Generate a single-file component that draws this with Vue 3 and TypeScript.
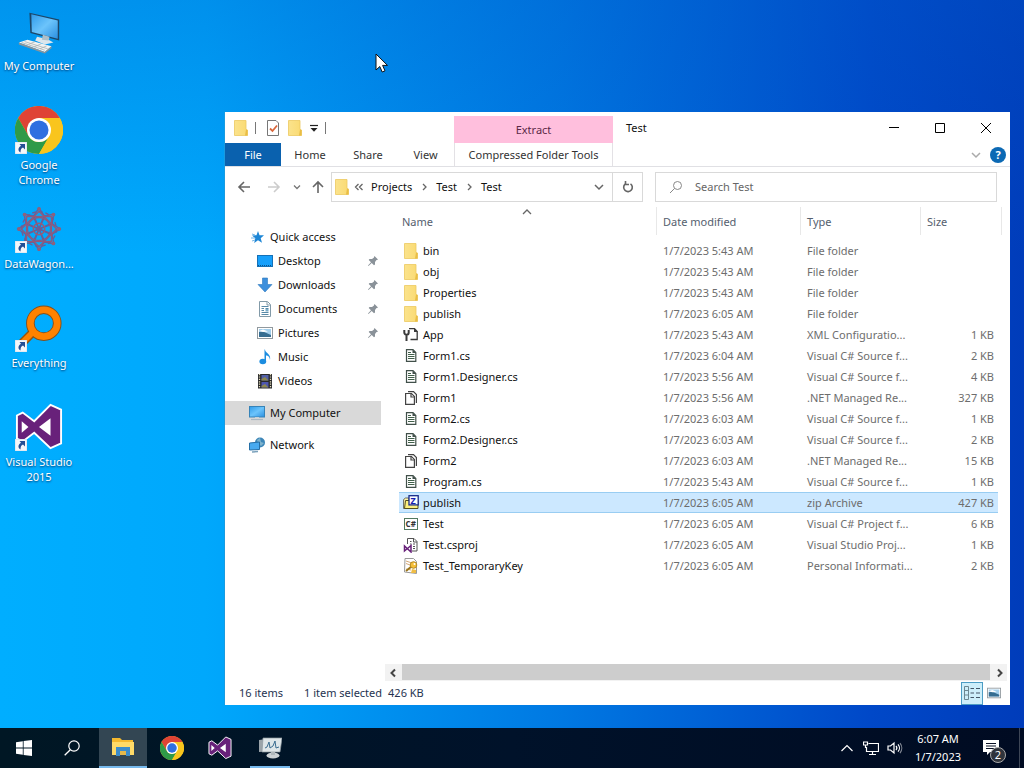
<script setup lang="ts">
import { ref } from 'vue'

interface Shortcut { label: string; icon: string; linked: boolean }
interface NavItem { label: string; icon: string; pinned: boolean }
interface FileRow { name: string; icon: string; date: string; type: string; size: string }

const shortcuts: Shortcut[] = [
  { label: 'My Computer', icon: 'pc', linked: false },
  { label: 'Google Chrome', icon: 'chrome', linked: true },
  { label: 'DataWagon...', icon: 'wagon', linked: true },
  { label: 'Everything', icon: 'everything', linked: true },
  { label: 'Visual Studio 2015', icon: 'vs', linked: true },
]

const quickItems: NavItem[] = [
  { label: 'Desktop', icon: 'desktop', pinned: true },
  { label: 'Downloads', icon: 'download', pinned: true },
  { label: 'Documents', icon: 'document', pinned: true },
  { label: 'Pictures', icon: 'picture', pinned: true },
  { label: 'Music', icon: 'music', pinned: false },
  { label: 'Videos', icon: 'video', pinned: false },
]

const tabs = ['File', 'Home', 'Share', 'View']
const crumbs = ['Projects', 'Test', 'Test']

const files: FileRow[] = [
  { name: 'bin', icon: 'folder', date: '1/7/2023 5:43 AM', type: 'File folder', size: '' },
  { name: 'obj', icon: 'folder', date: '1/7/2023 5:43 AM', type: 'File folder', size: '' },
  { name: 'Properties', icon: 'folder', date: '1/7/2023 5:43 AM', type: 'File folder', size: '' },
  { name: 'publish', icon: 'folder', date: '1/7/2023 6:05 AM', type: 'File folder', size: '' },
  { name: 'App', icon: 'config', date: '1/7/2023 5:43 AM', type: 'XML Configuratio...', size: '1 KB' },
  { name: 'Form1.cs', icon: 'source', date: '1/7/2023 6:04 AM', type: 'Visual C# Source f...', size: '2 KB' },
  { name: 'Form1.Designer.cs', icon: 'source', date: '1/7/2023 5:56 AM', type: 'Visual C# Source f...', size: '4 KB' },
  { name: 'Form1', icon: 'resource', date: '1/7/2023 5:56 AM', type: '.NET Managed Re...', size: '327 KB' },
  { name: 'Form2.cs', icon: 'source', date: '1/7/2023 6:03 AM', type: 'Visual C# Source f...', size: '1 KB' },
  { name: 'Form2.Designer.cs', icon: 'source', date: '1/7/2023 6:03 AM', type: 'Visual C# Source f...', size: '2 KB' },
  { name: 'Form2', icon: 'resource', date: '1/7/2023 6:03 AM', type: '.NET Managed Re...', size: '15 KB' },
  { name: 'Program.cs', icon: 'source', date: '1/7/2023 5:43 AM', type: 'Visual C# Source f...', size: '1 KB' },
  { name: 'publish', icon: 'zip', date: '1/7/2023 6:05 AM', type: 'zip Archive', size: '427 KB' },
  { name: 'Test', icon: 'csharp', date: '1/7/2023 6:05 AM', type: 'Visual C# Project f...', size: '6 KB' },
  { name: 'Test.csproj', icon: 'csproj', date: '1/7/2023 6:05 AM', type: 'Visual Studio Proj...', size: '1 KB' },
  { name: 'Test_TemporaryKey', icon: 'key', date: '1/7/2023 6:05 AM', type: 'Personal Informati...', size: '2 KB' },
]

const selected = ref(12)
const query = ref('')
</script>

<template>
  <div class="screen">
    <svg class="sprites" aria-hidden="true">
      <defs>
        <linearGradient id="g-screen" x1="0" y1="0" x2="1" y2="1">
          <stop offset="0" stop-color="#2f9bea" /><stop offset=".5" stop-color="#6cc4fb" /><stop offset="1" stop-color="#2b8fe0" />
        </linearGradient>
        <linearGradient id="g-folder" x1="0" y1="0" x2="1" y2="0">
          <stop offset="0" stop-color="#fbe38c" /><stop offset="1" stop-color="#fada72" />
        </linearGradient>
        <symbol id="i-pc" viewBox="3 0 50 50">
          <path d="M18 6 49 13V35L19 27Z" fill="#1c4668" />
          <path d="M20 7.500 47.500 14V33L20.500 26Z" fill="url(#g-screen)" />
          <path d="M26 31 37 33.500 43 37 34 39 24 35Z" fill="#dce6ec" /><path d="M32 29 39 31 38 35 31 34Z" fill="#aebfc9" />
          <path d="M7 37 16 34 41 41 34 47Z" fill="#f3f3f1" /><path d="M7 37 34 47 41 41V43L34 48.500 7 39Z" fill="#8b9499" />
          <path d="M10 37 34 45M13 36 37 43.500M17 39 24 36M23 41.500 30 38.500M29 43.500 36 40.500" stroke="#a9b0b3" stroke-width=".8" fill="none" />
        </symbol>
        <symbol id="i-chrome" viewBox="0 0 48 48">
          <circle cx="24" cy="24" r="24" fill="#f9c51d" />
          <path d="M3.200 12A24 24 0 0 1 44.800 12H24L13.600 30Z" fill="#df4335" />
          <path d="M3.200 12 13.600 30A12 12 0 0 0 34.400 30L24 48A24 24 0 0 1 3.200 12Z" fill="#2f9a48" />
          <path d="M44.800 12A24 24 0 0 1 24 48L34.400 30 36 24 33 16 24 12Z" fill="#f9c51d" />
          <circle cx="24" cy="24" r="12" fill="#fff" /><circle cx="24" cy="24" r="9.500" fill="#2f6fe0" />
        </symbol>
        <symbol id="i-wagon" viewBox="0 0 50 50">
          <g fill="none" stroke="#6b5f96" stroke-width="1.400">
            <g>
              <path d="M25 25 19 12 25 3 31 12Z" /><path d="M25 25 19 12 25 3 31 12Z" transform="rotate(45 25 25)" />
              <path d="M25 25 19 12 25 3 31 12Z" transform="rotate(90 25 25)" /><path d="M25 25 19 12 25 3 31 12Z" transform="rotate(135 25 25)" />
              <path d="M25 25 19 12 25 3 31 12Z" transform="rotate(180 25 25)" /><path d="M25 25 19 12 25 3 31 12Z" transform="rotate(225 25 25)" />
              <path d="M25 25 19 12 25 3 31 12Z" transform="rotate(270 25 25)" /><path d="M25 25 19 12 25 3 31 12Z" transform="rotate(315 25 25)" />
            </g>
            <circle cx="25" cy="25" r="18" stroke-dasharray="4 3" /><circle cx="25" cy="25" r="12" stroke="#8f5a7c" />
            <rect x="12" y="12" width="26" height="26" stroke="#8f5a7c" /><rect x="12" y="12" width="26" height="26" transform="rotate(45 25 25)" stroke="#8f5a7c" />
            <circle cx="25" cy="25" r="6" stroke="#985c76" />
          </g>
          <g fill="#8d617d"><circle cx="25" cy="4" r="2" /><circle cx="25" cy="46" r="2" /><circle cx="4" cy="25" r="2" /><circle cx="46" cy="25" r="2" /><circle cx="10" cy="10" r="2" /><circle cx="40" cy="10" r="2" /><circle cx="40" cy="40" r="2" /></g>
        </symbol>
        <symbol id="i-everything" viewBox="0 0 50 50">
          <path d="M18 30 4 44" stroke="#9a5207" stroke-width="9" /><circle cx="30" cy="20" r="14" fill="none" stroke="#84501c" stroke-width="9" />
          <path d="M18 30 4 44" stroke="#ff8200" stroke-width="6" /><circle cx="30" cy="20" r="14" fill="none" stroke="#ff8200" stroke-width="7" />
        </symbol>
        <symbol id="i-vs" viewBox="0 0 50 50">
          <path d="M37 2 48 7V42L37 47 20 31 8 40 2 37V13L8 10 20 19Z" fill="#68217a" stroke="#fff" stroke-width="2" />
          <path d="M7 19 14 25 7 31ZM37 16V34L25 25Z" fill="#fff" />
        </symbol>
        <symbol id="i-link" viewBox="0 0 12 12">
          <rect width="12" height="12" fill="#f4f7fa" stroke="#bcd" stroke-width=".6" /><path d="M4.500 2H10V7.500L8 5.600C6 6.500 5.500 8 5.500 10.500 2.500 8.500 3 5.500 6 3.700Z" fill="#244f95" />
        </symbol>
        <symbol id="i-folder" viewBox="0 0 16 16">
          <path d="M1.500.5H13V9.500L14.500 10V15.500H1.500Z" fill="url(#g-folder)" stroke="#ecc95f" stroke-width=".8" />
          <path d="M13 9.500 12 15.500H14.500V10Z" fill="#e9bd45" />
        </symbol>
        <symbol id="i-config" viewBox="0 0 16 16">
          <path d="M6 1.700H11.500L14.200 4.500V12.500H7.500" fill="none" stroke="#3b3b3b" stroke-width="1.300" /><path d="M11 1V5H15Z" fill="#3b3b3b" />
          <path d="M1.300 3V5.500A2.200 2.200 0 0 0 5.700 5.500V3M3.500 7.500V14" fill="none" stroke="#3b3b3b" stroke-width="2" />
        </symbol>
        <symbol id="i-source" viewBox="0 0 16 16">
          <path d="M3.500 1.700H10L12.800 4.500V13.300H3.500Z" fill="#fff" stroke="#41504a" stroke-width="1.200" /><path d="M9.500 1.500V5H13Z" fill="#41504a" />
          <path d="M5 6.500H11.500M5 8.500H11.500M5 10.500H11.500M5 4.500H8" stroke="#41604a" stroke-width="1" />
        </symbol>
        <symbol id="i-resource" viewBox="0 0 16 16">
          <path d="M2.600 3.500H8.500L11.400 6.400V14.400H2.600Z" fill="#fff" stroke="#444" stroke-width="1.200" /><path d="M8 3.500V7H11.500M5 1.600H10.500L13.400 4.500V13" fill="none" stroke="#444" stroke-width="1.200" />
        </symbol>
        <symbol id="i-zip" viewBox="0 0 16 16">
          <path d="M.6 4.500 2.500 3H6V13.500H.6Z" fill="#fff6a9" stroke="#444" stroke-width=".8" /><path d="M2.500 5.500H15V13.500H1.500Z" fill="#fcf17f" stroke="#55501c" /><rect x="6" y=".7" width="9.200" height="9.200" fill="#fff" stroke="#182b8a" stroke-width="1.300" />
          <text x="7.600" y="8.800" font-size="9" font-weight="700" font-family="Open Sans, sans-serif" fill="#1620b0">Z</text>
        </symbol>
        <symbol id="i-csharp" viewBox="0 0 16 16">
          <rect x="1.500" y="2.500" width="13" height="11" fill="#fff" stroke="#537a60" /><text x="2.600" y="11" font-size="8" font-weight="700" font-family="Open Sans, sans-serif" fill="#333">C#</text>
        </symbol>
        <symbol id="i-csproj" viewBox="0 0 16 16">
          <path d="M4.500 7V1.500H11L14 4.500V14H9" fill="#fff" stroke="#555" /><path d="M10.500 1.500V5H14M7 4.500H8.500M7 7H8.500M10 7H12M10 9.500H12M10 11.500H12" fill="none" stroke="#555" />
          <path d="M1.500 9V14L8 8.500V15L1.500 9Z" fill="none" stroke="#68217a" stroke-width="1.500" />
        </symbol>
        <symbol id="i-key" viewBox="0 0 16 16">
          <path d="M2 .5H10.500L13.500 3.500V15.500L1.500 14Z" fill="#fff" stroke="#999" /><path d="M3 3 9 5M3 5.500 7 7M3 11 8 12" stroke="#d5a978" /><path d="M8.500 8.500 3 13" stroke="#9a7418" stroke-width="2" /><circle cx="10.500" cy="7" r="3.300" fill="#f5bf3a" stroke="#b58b24" /><circle cx="11.500" cy="6" r="1" fill="#fff" /><path d="M9 11 13 12V15H8Z" fill="#efbd45" />
        </symbol>
        <symbol id="i-star" viewBox="0 0 16 16">
          <path d="M9 2 10.500 6.200 15 6.300 11.700 9.300 13 13.800 9 11.300 5.200 14 6.300 9.300 3 6.500 7.500 6.200Z" fill="#1d86d6" /><path d="M3 5 6 6M2 9 6 9M3 12 6 11" stroke="#75b6e7" stroke-width="1" />
        </symbol>
        <symbol id="i-desktop" viewBox="0 0 16 16"><rect x=".5" y="2.500" width="15" height="11" fill="#17a0fb" stroke="#1571b7" /><path d="M1 12.500H15" stroke="#0a538b" stroke-dasharray="1 1" /></symbol>
        <symbol id="i-download" viewBox="0 0 16 16"><path d="M5.500 1H10.500V7.500H15L8 15 1 7.500H5.500Z" fill="#3d8fdc" stroke="#2e78bd" stroke-width=".6" /></symbol>
        <symbol id="i-document" viewBox="0 0 16 16"><path d="M2.500.5H10.500L13.500 3.500V15.500H2.500Z" fill="#fff" stroke="#829aa8" /><path d="M10 1V4H13" fill="none" stroke="#829aa8" /><path d="M4.500 5.500H11.500M4.500 7.500H7M8.500 7.500H11.500M4.500 9.500H7M4.500 11.500H11.500M4.500 13.500H11.500" stroke="#588aa8" /><rect x="8.500" y="8" width="3" height="2.500" fill="#79acc9" /></symbol>
        <symbol id="i-picture" viewBox="0 0 16 16"><rect x=".5" y="2.500" width="15" height="11" fill="#fff" stroke="#91999e" /><path d="M2 4H14V12H2Z" fill="#a3cfec" /><path d="M2 7 6 6.500 14 10V12H2Z" fill="#366d91" /><path d="M2 6 6 4.500 11 6.500 6 7Z" fill="#fff" /></symbol>
        <symbol id="i-music" viewBox="0 0 16 16"><path d="M8 .5C8 4 14.500 5 13 11 12.500 7.500 11 6.800 9 6.600V12.500H7.500V.5Z" fill="#1c8de0" /><ellipse cx="5.800" cy="12.500" rx="3.400" ry="2.800" fill="#1c8de0" /></symbol>
        <symbol id="i-video" viewBox="0 0 16 16"><rect x="1" y="1" width="14" height="14.500" fill="#29292b" /><path d="M2.500 1V15.500M13.500 1V15.500" stroke="#e6dfbd" stroke-width="1.300" stroke-dasharray="1.200 1.200" /><rect x="4.500" y="2" width="7" height="5.500" fill="#5361a7" /><rect x="4.500" y="9" width="7" height="5.500" fill="#4e56b0" /><path d="M4.500 6 8 4 11.500 7.500H4.500ZM4.500 13 8 11 11.500 14.500H4.500Z" fill="#8d8850" /></symbol>
        <symbol id="i-monitor" viewBox="0 0 16 16"><rect x=".5" y="1.500" width="15" height="10.500" fill="url(#g-screen)" stroke="#3683b8" /><path d="M2 14.500H14" stroke="#aab8c2" stroke-width="1.200" /><path d="M6 12.500H10" stroke="#c5d0d6" /></symbol>
        <symbol id="i-network" viewBox="0 0 16 16"><circle cx="11" cy="5.500" r="5" fill="#3d86b8" /><path d="M8 3 11 1 12 5 15 6 12 9 9 6Z" fill="#7fb3cd" /><path d="M.5 6 10.500 5V12.500L.5 13Z" fill="#48aaf0" stroke="#256fa7" /><path d="M3 15 9 14.500" stroke="#7aa1bb" stroke-width="1.500" /></symbol>
        <symbol id="i-pin" viewBox="0 0 12 12"><path d="M7.500 1 11 4.500 10 5 9.500 5 8 7 8 9.500 7 10.300 4.700 8 1.500 11 1 10.500 4 7.300 1.700 5 2.500 4 5 4 7 2.500V2Z" fill="#8a9299" /></symbol>
        <symbol id="i-check" viewBox="0 0 16 16"><path d="M2.500.5H11L13.500 3V15.500H2.500Z" fill="#fff" stroke="#777" /><path d="M5 8.500 7.500 11 12 5.500" stroke="#d9673c" stroke-width="1.800" fill="none" /></symbol>
        <symbol id="i-taskfolder" viewBox="0 0 24 24"><path d="M1 3H9L11 5H22V20H1Z" fill="#f5b92f" /><path d="M1 7H23V20H1Z" fill="#ffda68" /><path d="M5 12H19V21H15V16H9V21H5Z" fill="#3c8ccb" /><path d="M9 16H15V20H9Z" fill="#e7b94b" /></symbol>
        <symbol id="i-perf" viewBox="0 0 24 24"><path d="M1 5 16 3V16L1 17Z" fill="#9ba4aa" /><path d="M5 3 24 3 22 17 4 17Z" fill="#dfe6e9" stroke="#8c989f" stroke-width=".7" /><path d="M7 13 9 12 11 7 12 13 15 11 17 6 18 13 21 12" fill="none" stroke="#3a6c90" stroke-width="1" /><ellipse cx="15" cy="20.500" rx="6.500" ry="3" fill="#cbd1d4" /><path d="M13 17H17V20H13Z" fill="#aeb6ba" /></symbol>
      </defs>
    </svg>

    <main class="desktop">
      <nav class="shortcuts" aria-label="Desktop">
        <button v-for="s in shortcuts" :key="s.label" class="shortcut">
          <span class="art">
            <svg><use :href="'#i-' + s.icon" /></svg>
            <svg v-if="s.linked" class="link-badge"><use href="#i-link" /></svg>
          </span>
          <span class="shortcut-label">{{ s.label }}</span>
        </button>
      </nav>

      <svg class="pointer" viewBox="0 0 13 20"><path d="M1 1V17L4.800 13.500 7.200 19 10 17.800 7.600 12.400H12.500Z" fill="#fff" stroke="#111" /></svg>

      <section class="window" aria-label="Test">
        <header class="head">
          <div class="quickbar">
            <svg class="ico"><use href="#i-folder" /></svg>
            <span class="tick"></span>
            <button aria-label="Properties"><svg class="ico"><use href="#i-check" /></svg></button>
            <button aria-label="New folder"><svg class="ico"><use href="#i-folder" /></svg></button>
            <button aria-label="Customize toolbar"><svg class="drop" viewBox="0 0 10 10"><path d="M1 2.500H9" stroke="#222" stroke-width="1.200" /><path d="M1.500 5H8.500L5 8.800Z" fill="#222" /></svg></button>
            <span class="tick"></span>
          </div>
          <div class="extract">Extract</div>
          <div class="titlebar">
            <h1>Test</h1>
            <div class="controls">
              <button aria-label="Minimize"><svg viewBox="0 0 12 12"><path d="M1 5.500H11" /></svg></button>
              <button aria-label="Maximize"><svg viewBox="0 0 12 12"><path d="M1.500 1.500H10.500V10.500H1.500Z" /></svg></button>
              <button aria-label="Close"><svg viewBox="0 0 12 12"><path d="M1 1 11 11M11 1 1 11" /></svg></button>
            </div>
          </div>
          <div class="tabs">
            <button v-for="(t, i) in tabs" :key="t" :class="{ file: i === 0 }">{{ t }}</button>
          </div>
          <button class="tooltab">Compressed Folder Tools</button>
          <div class="help">
            <button aria-label="Expand the ribbon"><svg class="chev" viewBox="0 0 10 10"><path d="M1 3 5 7 9 3" stroke="#aaa" /></svg></button>
            <button class="question">?</button>
          </div>
        </header>

        <div class="locate">
          <div class="moves">
            <button aria-label="Back"><svg viewBox="0 0 14 14"><path d="M13 7H2M7 2 2 7 7 12" stroke="#666" /></svg></button>
            <button aria-label="Forward"><svg viewBox="0 0 14 14"><path d="M1 7H12M7 2 12 7 7 12" stroke="#ccc" /></svg></button>
            <button class="narrow" aria-label="Recent locations"><svg class="tiny" viewBox="0 0 10 10"><path d="M2 3.500 5 6.500 8 3.500" stroke="#777" /></svg></button>
            <button class="up" aria-label="Up"><svg viewBox="0 0 14 14"><path d="M7 13V2M2 7 7 2 12 7" stroke="#666" /></svg></button>
          </div>
          <div class="address">
            <svg class="ico"><use href="#i-folder" /></svg>
            <svg class="tiny" viewBox="0 0 10 10"><path d="M4.500 2 1.500 5 4.500 8M8.500 2 5.500 5 8.500 8" stroke="#666" /></svg>
            <template v-for="(c, i) in crumbs" :key="i">
              <svg v-if="i > 0" class="tiny" viewBox="0 0 10 10"><path d="M4 2 7 5 4 8" stroke="#666" /></svg>
              <button class="crumb">{{ c }}</button>
            </template>
            <button class="history" aria-label="Previous locations"><svg class="chev" viewBox="0 0 10 10"><path d="M1 3 5 7 9 3" stroke="#666" /></svg></button>
            <button class="refresh" aria-label="Refresh"><svg viewBox="0 0 14 14"><path d="M4 4.200A4.300 4.300 0 1 0 9.500 3.800M4.500 1V4.500H8" stroke="#666" /></svg></button>
          </div>
          <label class="search">
            <svg viewBox="0 0 14 14"><circle cx="8.500" cy="5.500" r="4" /><path d="M5.500 8.500 1 13" /></svg>
            <input v-model="query" type="text" placeholder="Search Test" aria-label="Search Test" />
          </label>
        </div>

        <div class="body">
          <nav class="tree" aria-label="Folders">
            <button class="branch root"><svg class="ico"><use href="#i-star" /></svg>Quick access</button>
            <button v-for="n in quickItems" :key="n.label" class="branch leaf">
              <svg class="ico"><use :href="'#i-' + n.icon" /></svg>{{ n.label }}
              <svg v-if="n.pinned" class="pin"><use href="#i-pin" /></svg>
            </button>
            <button class="branch root current"><svg class="ico"><use href="#i-monitor" /></svg>My Computer</button>
            <button class="branch root network"><svg class="ico"><use href="#i-network" /></svg>Network</button>
          </nav>
          <div class="listing">
            <div class="list-scroll">
              <table>
                <colgroup><col /><col class="c-date" /><col class="c-type" /><col class="c-size" /><col class="c-end" /></colgroup>
                <thead>
                  <tr>
                    <th class="sorted">Name<svg class="tiny sort" viewBox="0 0 10 10"><path d="M1 7 5 3 9 7" stroke="#666" /></svg></th>
                    <th>Date modified</th><th>Type</th><th class="open">Size</th><th aria-hidden="true"></th>
                  </tr>
                </thead>
                <tbody>
                  <tr v-for="(f, i) in files" :key="i" :class="{ chosen: i === selected }" @click="selected = i">
                    <td><span class="file-name"><svg class="ico"><use :href="'#i-' + f.icon" /></svg>{{ f.name }}</span></td>
                    <td>{{ f.date }}</td><td>{{ f.type }}</td><td class="size">{{ f.size }}</td>
                  </tr>
                </tbody>
              </table>
            </div>
            <div class="hbar">
              <button aria-label="Scroll left"><svg class="tiny" viewBox="0 0 10 10"><path d="M6 1.500 2.500 5 6 8.500" stroke="#444" stroke-width="2" /></svg></button>
              <span class="thumb"></span>
              <button aria-label="Scroll right"><svg class="tiny" viewBox="0 0 10 10"><path d="M4 1.500 7.500 5 4 8.500" stroke="#444" stroke-width="2" /></svg></button>
            </div>
          </div>
        </div>

        <footer class="status">
          <span class="count">16 items</span>
          <span>1 item selected</span>
          <span class="bytes">426 KB</span>
          <div class="views">
            <button class="on" aria-label="Details"><svg viewBox="0 0 18 16"><path d="M1.500 1.500H5.500V14.500H1.500ZM1.500 5.500H5.500M1.500 10H5.500" stroke="#6c8792" /><path d="M7.500 3.500H11M13 3.500H17M7.500 8H11M13 8H17M7.500 12.500H11M13 12.500H17" stroke="#456" /></svg></button>
            <button aria-label="Large icons"><svg class="pic"><use href="#i-picture" /></svg></button>
          </div>
        </footer>
      </section>
    </main>

    <footer class="taskbar">
      <button aria-label="Start"><svg class="win" viewBox="0 0 16 16"><path d="M0 2.200 6.800 1.200V7.600H0ZM7.600 1.100 16 0V7.600H7.600ZM0 8.400H6.800V14.800L0 13.800ZM7.600 8.400H16V16L7.600 14.900Z" fill="#fff" /></svg></button>
      <button aria-label="Search"><svg class="win" viewBox="0 0 16 16"><circle cx="10" cy="6" r="5.200" fill="none" stroke="#fff" stroke-width="1.200" /><path d="M6.300 9.700.7 15.300" stroke="#fff" stroke-width="1.300" /></svg></button>
      <button class="app active" aria-label="File Explorer"><svg><use href="#i-taskfolder" /></svg></button>
      <button class="app" aria-label="Google Chrome"><svg><use href="#i-chrome" /></svg></button>
      <button class="app" aria-label="Visual Studio"><svg><use href="#i-vs" /></svg></button>
      <button class="app running" aria-label="Performance monitor"><svg><use href="#i-perf" /></svg></button>
      <div class="tray">
        <button aria-label="Show hidden icons"><svg viewBox="0 0 16 16"><path d="M2.500 11 8 5.500 13.500 11" /></svg></button>
        <button aria-label="Network"><svg viewBox="0 0 16 16"><path d="M5.500 3.500H15.500V11.500H3.500V7M.5 2H4.500V5H.5ZM2.500 5V8M9.500 11.500V14.500M6 14.500H13" /></svg></button>
        <button aria-label="Volume"><svg viewBox="0 0 16 16"><path d="M1 6H3.500L7 3V13L3.500 10H1ZM9 6A3 3 0 0 1 9 10M11 4.300A5.500 5.500 0 0 1 11 11.700" /><path d="M13 3A8 8 0 0 1 13 13" opacity=".5" /></svg></button>
        <button class="clock"><span>6:07 AM</span><span>1/7/2023</span></button>
        <button class="notes" aria-label="Notifications">
          <svg viewBox="0 0 18 18"><path d="M1 1H17V13H8L5 16V13H1Z" fill="#fff" stroke="none" /><path d="M4 4.500H14M4 7H14M4 9.500H14" stroke="#0a1226" /></svg>
          <span class="badge">2</span>
        </button>
        <span class="peek"></span>
      </div>
    </footer>
  </div>
</template>

<style>
html, body { margin: 0; overflow: hidden; }
</style>

<style scoped>
.screen {
  height: 100vh;
  display: flex;
  flex-direction: column;
  overflow: hidden;
  font: 11px/16px "Noto Sans", "Open Sans", sans-serif;
  color: #111;
}
.screen *, .screen *::before, .screen *::after { box-sizing: border-box; }
.sprites { position: absolute; width: 0; height: 0; }
button { font: inherit; color: inherit; background: none; border: 0; padding: 0; margin: 0; }
svg { display: block; flex: none; }
.ico { width: 16px; height: 16px; }
.tiny { width: 10px; height: 10px; fill: none; stroke-width: 1.3; }
.chev { width: 10px; height: 10px; fill: none; stroke-width: 1.5; }

.desktop {
  position: relative;
  flex: 1;
  min-height: 0;
  background:
    linear-gradient(to bottom, rgba(0, 90, 200, 0.3), rgba(0, 90, 200, 0) 35%),
    linear-gradient(to right, #00aeff 0%, #00a8fc 20%, #0078e2 55%, #0048c8 85%, #003cba 100%);
}
.shortcuts { width: 78px; padding-top: 6px; display: flex; flex-direction: column; }
.shortcut { height: 99px; display: flex; flex-direction: column; align-items: center; gap: 2px; color: #fff; }
.art { position: relative; width: 50px; height: 50px; display: grid; place-items: center; }
.art svg { width: 48px; height: 48px; }
.art .link-badge { position: absolute; left: 1px; bottom: 1px; width: 12px; height: 12px; }
.shortcut-label { max-width: 78px; line-height: 15px; text-align: center; text-shadow: 0 1px 2px rgba(0, 30, 80, 0.8); }
.pointer { position: absolute; left: 375px; top: 53px; width: 13px; height: 20px; }

.window {
  position: absolute;
  inset: 112px 14px 23px 224px;
  display: flex;
  flex-direction: column;
  background: #fff;
  border-left: 1px solid #1a9be0;
}
.head {
  display: grid;
  grid-template-columns: 229px 159px 1fr;
  grid-template-rows: 31px 23px;
  border-bottom: 1px solid #e0e0e4;
}
.quickbar { display: flex; align-items: center; gap: 6px; padding-left: 8px; }
.tick { width: 1px; height: 12px; background: #777; }
.quickbar .tick:nth-child(2) { margin-right: 3px; }
.drop { width: 10px; height: 10px; }
.extract { margin-top: 4px; background: #ffbfdd; color: #5b2947; display: grid; place-items: center; }
.titlebar { display: flex; justify-content: space-between; padding-left: 13px; }
.titlebar h1 { margin: 0; font: inherit; line-height: 31px; }
.controls { display: flex; padding-right: 1px; }
.controls button { width: 46px; display: grid; place-items: center; }
.controls svg { width: 12px; height: 12px; fill: none; stroke: #000; stroke-width: 1; }
.tabs { display: grid; grid-template-columns: 56px 58px 58px 1fr; color: #333; }
.tabs .file { background: #0a61ae; color: #fff; }
.tooltab { border: solid #e3e1e5; border-width: 0 1px; color: #333; white-space: nowrap; }
.help { display: flex; align-items: center; justify-content: flex-end; gap: 9px; padding-right: 4px; }
.question { width: 16px; height: 16px; border-radius: 8px; background: #0c69b4; color: #fff; font-weight: 700; line-height: 16px; }

.locate {
  display: grid;
  grid-template-columns: 106px minmax(0, 312fr) 12px minmax(0, 342fr);
  padding: 5px 13px 4px 0;
}
.moves { display: flex; padding-left: 4px; }
.moves button { width: 30px; display: grid; place-items: center; }
.moves .narrow { width: 16px; }
.moves .up { width: 26px; }
.moves svg:not(.tiny), .refresh svg { width: 14px; height: 14px; fill: none; stroke-width: 1.6; }
.address, .search { height: 30px; border: 1px solid #d9d9d9; display: flex; align-items: center; }
.address { padding-left: 2px; gap: 4px; }
.crumb { padding: 0 3px; }
.history { margin-left: auto; width: 26px; display: grid; place-items: center; }
.refresh { width: 30px; height: 28px; margin-left: -4px; border-left: 1px solid #d9d9d9; display: grid; place-items: center; }
.search { grid-column: 4; padding-left: 13px; gap: 12px; }
.search svg { width: 14px; height: 14px; fill: none; stroke: #888; }
.search input { flex: 1; min-width: 0; border: 0; padding: 0; outline: 0; font: inherit; background: none; }
.search input::placeholder { color: #666; opacity: 1; }

.body { flex: 1; min-height: 0; display: flex; }
.tree { width: 156px; padding-top: 19px; }
.branch { width: 100%; height: 24px; display: flex; align-items: center; gap: 5px; text-align: left; }
.root { padding-left: 24px; }
.leaf { padding-left: 32px; }
.pin { width: 12px; height: 12px; margin-left: auto; margin-right: 2px; }
.current { margin-top: 8px; background: #d9d9d9; }
.network { margin-top: 8px; }
.listing { flex: 1; min-width: 0; display: flex; flex-direction: column; padding: 0 3px 0 4px; }
.list-scroll { flex: 1; min-height: 0; overflow: hidden; padding: 1px 5px 0 14px; }
table { width: 100%; table-layout: fixed; border-collapse: collapse; color: #6d6d6d; }
.c-date { width: 144px; }
.c-type { width: 120px; }
.c-size { width: 77px; }
.c-end { width: 4px; }
th { position: relative; height: 33px; padding: 0 0 3px 6px; font-weight: 400; text-align: left; color: #55606e; background: linear-gradient(#e8e8e8, #e8e8e8) right top / 1px 28px no-repeat; }
th.open { background: none; }
th.sorted { padding-left: 3px; }
.sort { position: absolute; top: 0; left: calc(50% - 6px); }
td { height: 21px; padding: 0 0 0 6px; white-space: nowrap; overflow: hidden; }
td:first-child { padding-left: 4px; color: #111; }
td.size { text-align: right; padding-right: 4px; }
.file-name { display: flex; align-items: center; gap: 4px; }
.chosen td { background: #cce8ff; box-shadow: inset 0 1px #99cdf2, inset 0 -1px #99cdf2; }
.hbar { height: 17px; display: flex; background: #f2f2f2; }
.hbar button { width: 17px; display: grid; place-items: center; }
.thumb { flex: 1; height: 16px; background: #cdcdcd; }

.status { height: 24px; display: flex; align-items: center; padding-left: 14px; color: #263350; }
.count { margin-right: 21px; }
.bytes { margin-left: 6px; }
.views { margin-left: auto; display: flex; padding-right: 5px; }
.views button { width: 22px; height: 23px; display: grid; place-items: center; }
.views .on { background: #cdeefa; border: 1px solid #4c9cc4; }
.views svg { width: 18px; height: 16px; fill: none; }
.views .pic { width: 14px; height: 14px; }

.taskbar { height: 40px; display: flex; background: linear-gradient(to right, #001724, #00122a 50%, #000b22); color: #fff; }
.taskbar > button { width: 48px; display: grid; place-items: center; }
.win { width: 16px; height: 16px; }
.app svg { width: 24px; height: 24px; }
.active { margin: 0 1px 0 3px; background: #334653; border-bottom: 2px solid #76b9ed; }
.taskbar .running { width: 40px; margin-left: 6px; border-bottom: 2px solid #76b9ed; }
.tray { margin-left: auto; display: flex; align-items: center; }
.tray > button { width: 24px; height: 40px; display: grid; place-items: center; }
.tray svg { width: 16px; height: 16px; fill: none; stroke: #fff; stroke-width: 1.2; }
.tray .clock { width: 62px; display: flex; flex-direction: column; align-items: center; justify-content: center; line-height: 18px; }
.tray .notes { position: relative; width: 50px; padding-right: 6px; }
.tray .notes svg { width: 18px; height: 18px; }
.badge { position: absolute; left: 21px; top: 19px; width: 16px; height: 16px; border: 1px solid #aaa; border-radius: 8px; background: #30343c; line-height: 14px; text-align: center; }
.peek { width: 5px; height: 40px; border-left: 1px solid #3d4656; }
</style>
